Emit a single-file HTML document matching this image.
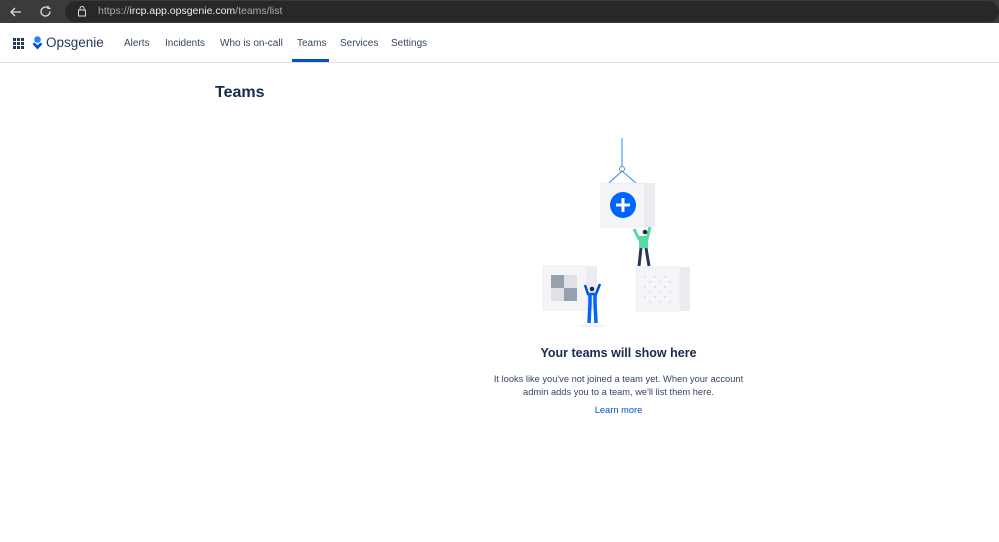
<!DOCTYPE html>
<html><head><style>
body{margin:0;width:999px;height:542px;background:#fff;font-family:"Liberation Sans",sans-serif;overflow:hidden;position:relative}
.top{position:absolute;left:0;top:0;width:999px;height:23px;background:#3b3b3b}
.addr{position:absolute;left:65px;top:1px;width:934px;height:21px;background:#282828;border-radius:11px}
.url{position:absolute;left:98px;top:5px;font-size:10.5px;color:#aaa}
.url b{color:#eee;font-weight:normal}
.nav{position:absolute;top:24px;left:0;width:999px;height:38px;border-bottom:1px solid #dfe1e6}
.nav span{position:absolute;top:14px;font-size:10px;color:#344563}
.ul{position:absolute;left:292px;top:59px;width:37px;height:3px;background:#0052cc}
h1{position:absolute;left:215px;top:84px;margin:0;font-size:16px;color:#172b4d;font-weight:bold}
.t{position:absolute;width:999px;left:119px;text-align:center}
</style></head><body>
<div class="top"><div class="addr"></div>
<svg style="position:absolute;left:9px;top:5px" width="14" height="14" viewBox="0 0 14 14"><path d="M12 7H2M6 3L2 7l4 4" stroke="#ddd" stroke-width="1.3" fill="none"/></svg>
<svg style="position:absolute;left:39px;top:5px" width="13" height="13" viewBox="0 0 13 13"><path d="M11 6.5A4.5 4.5 0 1 1 9 2.8M9 0.8v2.5h2.5" stroke="#ddd" stroke-width="1.3" fill="none"/></svg>
<svg style="position:absolute;left:77px;top:5px" width="10" height="12" viewBox="0 0 10 12"><rect x="1.5" y="5" width="7" height="6" stroke="#ddd" fill="none"/><path d="M3 5V3.5a2 2 0 0 1 4 0V5" stroke="#ddd" fill="none"/></svg>
<div class="url">https://<b>ircp.app.opsgenie.com</b>/teams/list</div></div>
<div class="nav">
<svg style="position:absolute;left:13px;top:14px" width="11" height="11" viewBox="0 0 11 11" fill="#253858"><rect x="0" y="0" width="3" height="3"/><rect x="4" y="0" width="3" height="3"/><rect x="8" y="0" width="3" height="3"/><rect x="0" y="4" width="3" height="3"/><rect x="4" y="4" width="3" height="3"/><rect x="8" y="4" width="3" height="3"/><rect x="0" y="8" width="3" height="3"/><rect x="4" y="8" width="3" height="3"/><rect x="8" y="8" width="3" height="3"/></svg>
<svg style="position:absolute;left:32px;top:12px" width="11" height="14" viewBox="0 0 11 14"><circle cx="5.5" cy="3.5" r="3.3" fill="#2684ff"/><path d="M0.5 8l5 5.5 5-5.5-2-1.5-3 2.7-3-2.7z" fill="#0052cc"/></svg>
<span style="left:46px;top:11px;font-size:13.5px;color:#253858">Opsgenie</span>
<span style="left:124px">Alerts</span><span style="left:165px">Incidents</span><span style="left:220px">Who is on-call</span><span style="left:297px">Teams</span><span style="left:340px">Services</span><span style="left:391px">Settings</span>
</div>
<div class="ul"></div>
<h1>Teams</h1>
<svg style="position:absolute;left:530px;top:130px" width="170" height="200" viewBox="530 130 170 200">
<line x1="622" y1="138" x2="622" y2="166" stroke="#4c9aff" stroke-width="1.2"/>
<circle cx="622" cy="169" r="2.5" stroke="#7a869a" fill="none"/>
<path d="M609 183L622 171L636 183" stroke="#2684ff" fill="none"/>
<rect x="601" y="183" width="54" height="44" fill="#ebecf0"/><rect x="601" y="183" width="44" height="44" fill="#f4f5f7" stroke="#e1e3e8" stroke-width="0.5"/>
<circle cx="623" cy="205" r="13" fill="#0065ff"/><path d="M623 198v14M616 205h14" stroke="#fff" stroke-width="3"/>
<rect x="636" y="267" width="54" height="44" fill="#ebecf0"/><rect x="636" y="267" width="44" height="44" fill="#f4f5f7" stroke="#e1e3e8" stroke-width="0.5"/>
<g fill="#c1c7d0"><circle cx="645" cy="277" r=".7"/><circle cx="650" cy="282" r=".7"/><circle cx="655" cy="277" r=".7"/><circle cx="660" cy="282" r=".7"/><circle cx="665" cy="277" r=".7"/><circle cx="670" cy="282" r=".7"/><circle cx="645" cy="287" r=".7"/><circle cx="655" cy="287" r=".7"/><circle cx="665" cy="287" r=".7"/><circle cx="650" cy="292" r=".7"/><circle cx="660" cy="292" r=".7"/><circle cx="670" cy="292" r=".7"/><circle cx="645" cy="297" r=".7"/><circle cx="655" cy="297" r=".7"/><circle cx="665" cy="297" r=".7"/><circle cx="650" cy="302" r=".7"/><circle cx="660" cy="302" r=".7"/><circle cx="670" cy="302" r=".7"/></g>
<rect x="543" y="266" width="54" height="44" fill="#ebecf0"/><rect x="543" y="266" width="44" height="44" fill="#f4f5f7" stroke="#e1e3e8" stroke-width="0.5"/>
<rect x="551" y="275" width="13" height="13" fill="#97a0af"/><rect x="564" y="275" width="13" height="13" fill="#dfe1e6"/><rect x="551" y="288" width="13" height="13" fill="#dfe1e6"/><rect x="564" y="288" width="13" height="13" fill="#97a0af"/>
<path d="M634 229l5 10h8l3-12" stroke="#57d9a3" stroke-width="3" fill="none"/><rect x="639" y="236" width="9" height="12" fill="#57d9a3"/>
<circle cx="645" cy="232" r="2.3" fill="#172b4d"/>
<path d="M641 248l-2 18M646 248l3 18" stroke="#253858" stroke-width="3"/>
<path d="M585 285l3 9h8l4-10" stroke="#0052cc" stroke-width="2.5" fill="none"/>
<circle cx="592" cy="289" r="2.3" fill="#172b4d"/>
<path d="M590 293v10l-1 20M595 293v10l1 20" stroke="#0065ff" stroke-width="3.5"/>
<ellipse cx="593" cy="326" rx="14" ry="1.2" fill="#f0f1f4"/>
</svg>
<div class="t" style="top:346px;font-size:12.5px;font-weight:bold;color:#172b4d">Your teams will show here</div>
<div class="t" style="top:373px;font-size:9.3px;color:#344563;line-height:13px">It looks like you've not joined a team yet. When your account<br>admin adds you to a team, we'll list them here.</div>
<div class="t" style="top:405px;font-size:9.3px;color:#0052cc">Learn more</div>
</body></html>
